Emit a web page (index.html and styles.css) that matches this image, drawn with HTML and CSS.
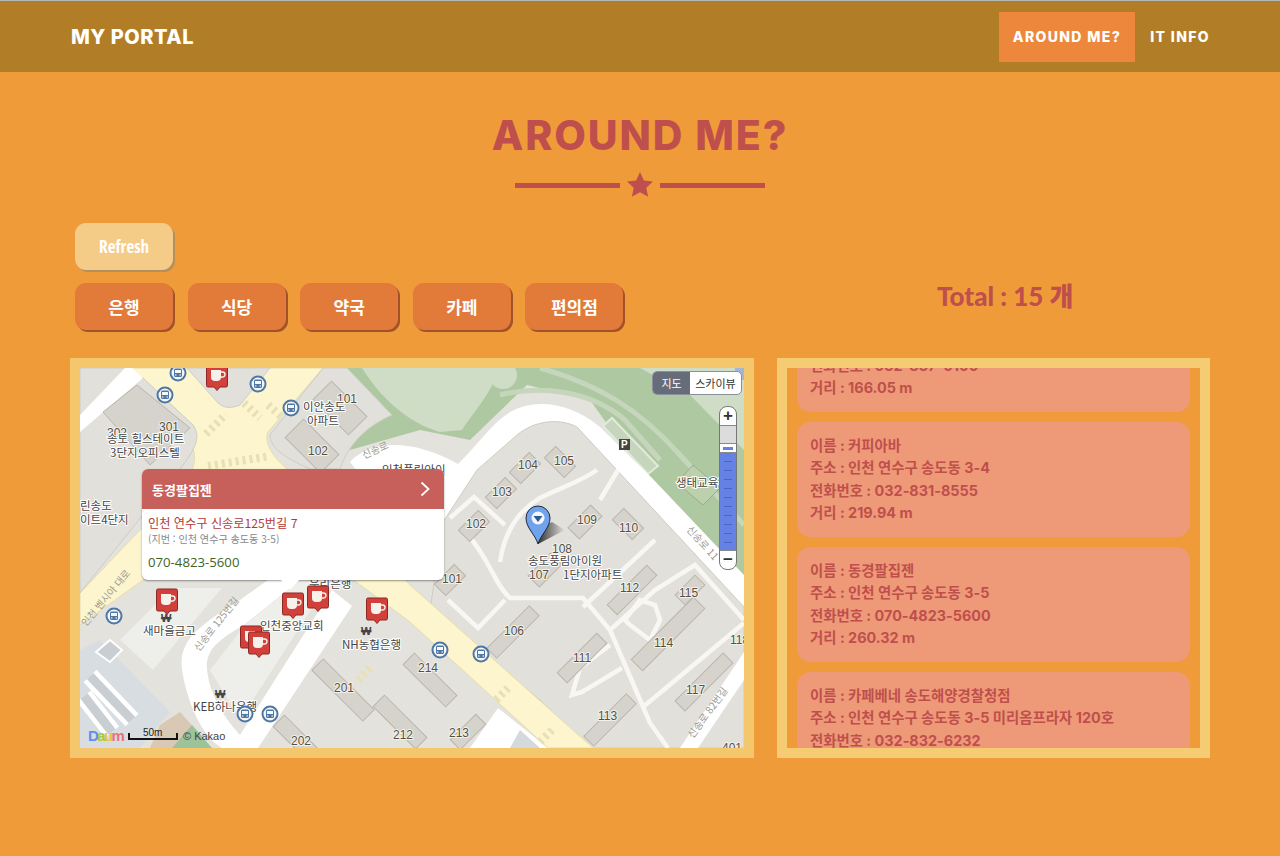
FILE: index.html
```html
<!DOCTYPE html>
<html lang="ko">

<head>
    <meta charset="UTF-8" />
    <meta name="viewport" content="width=device-width, initial-scale=1.0" />
    <title>My Portal</title>
    <link rel="stylesheet" href="styles.css">
</head>

<body>
    <header class="top-bar">
        <a class="logo">MY PORTAL</a>
        <nav class="nav">
            <a class="nav-item active">AROUND ME?</a>
            <a class="nav-item">IT INFO</a>
        </nav>
    </header>

    <main class="page">
        <h1 class="page-title">AROUND ME?</h1>
        <div class="divider">
            <span class="divider-line"></span>
            <svg class="divider-star" viewBox="0 0 26 25">
                <path d="M13 0l3.900 8.400 9.100 1.100-6.700 6.200 1.800 9.100L13 20.300 4.900 24.800l1.800-9.100L0 9.500l9.100-1.100z" />
            </svg>
            <span class="divider-line"></span>
        </div>

        <div class="toolbar">
            <div class="toolbar-buttons">
                <button class="btn btn-light">Refresh</button>
                <div class="category-row">
                    <button class="btn">은행</button>
                    <button class="btn">식당</button>
                    <button class="btn">약국</button>
                    <button class="btn">카페</button>
                    <button class="btn">편의점</button>
                </div>
            </div>
            <div class="total">Total : 15 개</div>
        </div>

        <div class="panels">
            <section class="map-panel">
                <div class="map">
                    <svg class="map-canvas" viewBox="80 368 664 380">
                        <defs>
                            <symbol id="bus" viewBox="0 0 18 18">
                                <circle cx="9" cy="9" r="7.500" fill="#f4f6f8" stroke="#4f77a3" stroke-width="2" />
                                <rect x="5" y="4.500" width="8" height="8.500" rx="1.500" fill="#4f77a3" />
                                <rect x="6" y="6" width="6" height="3" fill="#f4f6f8" />
                                <circle cx="6.800" cy="11" r=".8" fill="#f4f6f8" />
                                <circle cx="11.200" cy="11" r=".8" fill="#f4f6f8" />
                            </symbol>
                            <symbol id="cafe" viewBox="0 0 22 27">
                                <path d="M2 1h18a1.500 1.500 0 0 1 1.500 1.500v19a1.500 1.500 0 0 1-1.500 1.500h-6l-3 3.500L8 23H2a1.500 1.500 0 0 1-1.500-1.500v-19A1.500 1.500 0 0 1 2 1z" fill="#d2403b" stroke="#8c2723" />
                                <path d="M5 6h10v7a4 4 0 0 1-4 4H9a4 4 0 0 1-4-4z" fill="#f7f1ec" />
                                <path d="M15 8h1.500a2.200 2.200 0 0 1 0 5H15" fill="none" stroke="#f7f1ec" stroke-width="1.400" />
                            </symbol>
                            <linearGradient id="pin-shadow" x1="0" x2="1" y1="0" y2="0">
                                <stop offset="0" stop-color="#333" />
                                <stop offset="1" stop-color="#333" stop-opacity="0" />
                            </linearGradient>
                        </defs>

                        <!-- 바닥 -->
                        <rect class="ground" x="80" y="368" width="664" height="380" />

                        <!-- 공원 -->
                        <path class="park" d="M322 368H744V620L640 470 590 400 527 385 470 440 420 430 350 450Z" />
                        <path class="park-light" d="M362 368H500C490 395 475 410 462 430L440 432C415 425 385 405 362 368Z" />
                        <path class="park-path" d="M540 368C600 385 640 410 680 455L744 525" />
                        <path class="park-path" d="M500 395C540 385 590 390 625 420L660 460" />
                        <path class="park-light" d="M640 368H744V450L690 395Z" />
                        <circle class="park-light" cx="503" cy="375" r="14" />
                        <rect class="water" x="735" y="368" width="9" height="12" />
                        <path class="park-lot" d="M603 426L612 418 658 466 648 474Z" />
                        <path class="park-dark" d="M693 465L720 488 703 505 677 483Z" />

                        <!-- 도로 -->
                        <path class="road" d="M350 462C370 440 412 438 458 464C475 448 490 425 510 412C535 398 570 402 600 427L652 478L744 575V625L690 575 600 480 540 430 500 470 460 560 380 500Z" />
                        <path class="road" d="M332 590L352 606 258 748H222C200 735 187 700 182 670C178 640 200 625 240 600L268 580H300L244 625C218 640 205 650 207 670C210 695 222 715 240 735Z" />
                        <path class="block-light" d="M120 640L172 588H222L153 670Z" />
                        <path class="block-light" d="M245 625L300 580H330L240 720 210 670Z" />

                        <!-- 아파트 단지 -->
                        <path class="block" d="M443 522L477 470 517 435C535 420 560 418 577 427L693 552 744 607V748H590L540 700 430 610Z" />
                        <path class="road" d="M744 652V680L698 748H680Z" />
                        <path class="lane" d="M500 562C504 535 516 512 540 498C560 488 580 482 597 470" />
                        <path class="lane" d="M450 518L474 497 505 525" />
                        <path class="lane" d="M468 535C490 560 495 585 510 598H583L610 630 650 723 668 748" />
                        <path class="lane" d="M583 607L655 540" />
                        <path class="lane" d="M610 630L655 590 695 565 744 620" />
                        <path class="lane" d="M643 707L744 623" />
                        <path class="lane" d="M610 645L580 668 572 695 582 692 622 668" />
                        <path class="lane" d="M630 625L650 640 660 620 655 605 640 600 625 620Z" />
                        <path class="lane" d="M448 600L478 628 505 600" />
                        <path class="lane" d="M600 500L618 470" />

                        <path class="road" d="M498 708L548 748H470Z" />
                        <path class="glass" d="M510 748L520 730 540 748Z" />

                        <!-- 노란 도로 -->
                        <path class="main-road" d="M130 368H323L268 432C262 446 280 470 320 490L410 585 593 748H548L410 622 300 540 240 520 143 580 80 625V593L180 488C205 462 195 440 170 410L130 368Z" />
                        <path class="block" d="M187 368L218 403C225 409 232 408 240 405L270 368Z" />
                        <path class="block" d="M80 368H125L143 378 193 425C200 435 198 445 183 465L80 593Z" />
                        <path class="road" d="M80 415L125 368H132L143 378 80 432Z" />
                        <path class="block" d="M323 368H347L392 415C370 425 350 440 340 469H310C290 460 270 450 270 435Z" />
                        <path class="crosswalk" d="M206 434L226 414M244 403L260 418M268 405L283 418M208 466L270 456" />
                        <path class="crosswalk" d="M358 680L372 666M496 700L510 686M540 742L552 730" />

                        <!-- 왼쪽 아래 주차장 -->
                        <path class="parking" d="M80 650L100 640 170 712 140 748H80Z" />
                        <path class="parking-lane" d="M90 676L132 720M84 696L112 732" />
                        <path class="parking-bar" d="M90 676L132 720M84 696L112 732" />
                        <path class="parking-lot" d="M96 652L110 640 122 650 110 662Z" />
                        <path class="field" d="M160 725L180 712 205 740 195 748H150Z" />
                        <path class="field-green" d="M172 748L192 725 212 748Z" />

                        <!-- 건물 -->
                        <path class="bld" d="M103 412L137 385 190 428 150 465Z" />
                        <rect class="bld" x="-25" y="-13" width="50" height="26" transform="translate(340 408) rotate(45)" />
                        <rect class="bld" x="-25" y="-13" width="50" height="26" transform="translate(312 446) rotate(45)" />
                        <rect class="bld" x="-14" y="-8" width="28" height="16" transform="translate(525 468) rotate(-45)" />
                        <rect class="bld" x="-14" y="-8" width="28" height="16" transform="translate(560 462) rotate(45)" />
                        <rect class="bld" x="-14" y="-8" width="28" height="16" transform="translate(501 493) rotate(-45)" />
                        <rect class="bld" x="-14" y="-8" width="28" height="16" transform="translate(474 526) rotate(-45)" />
                        <rect class="bld" x="-16" y="-8" width="32" height="16" transform="translate(585 522) rotate(-45)" />
                        <rect class="bld" x="-14" y="-8" width="28" height="16" transform="translate(628 524) rotate(45)" />
                        <rect class="bld" x="-16" y="-8" width="32" height="16" transform="translate(545 570) rotate(-45)" />
                        <rect class="bld" x="-28" y="-7" width="56" height="14" transform="translate(632 590) rotate(-45)" />
                        <rect class="bld" x="-14" y="-7" width="28" height="14" transform="translate(690 590) rotate(-45)" />
                        <rect class="bld" x="-44" y="-8" width="88" height="16" transform="translate(668 634) rotate(-45)" />
                        <rect class="bld" x="-34" y="-7" width="68" height="14" transform="translate(704 682) rotate(-45)" />
                        <rect class="bld" x="-28" y="-7" width="56" height="14" transform="translate(582 658) rotate(-45)" />
                        <rect class="bld" x="-30" y="-7" width="60" height="14" transform="translate(513 632) rotate(-45)" />
                        <rect class="bld" x="-30" y="-7" width="60" height="14" transform="translate(610 720) rotate(-45)" />
                        <rect class="bld" x="-14" y="-8" width="28" height="16" transform="translate(450 580) rotate(-45)" />
                        <rect class="bld" x="-36" y="-8" width="72" height="16" transform="translate(343 690) rotate(45)" />
                        <rect class="bld" x="-30" y="-8" width="60" height="16" transform="translate(400 722) rotate(45)" />
                        <rect class="bld" x="-30" y="-8" width="60" height="16" transform="translate(430 680) rotate(45)" />
                        <rect class="bld" x="-30" y="-8" width="60" height="16" transform="translate(300 742) rotate(45)" />
                        <rect class="bld" x="-18" y="-7" width="36" height="14" transform="translate(468 732) rotate(-45)" />

                        <!-- 라벨 -->
                        <text class="num" x="337" y="403">101</text>
                        <text class="num" x="159" y="431">301</text>
                        <text class="num" x="107" y="437">302</text>
                        <text class="num" x="308" y="455">102</text>
                        <text class="num" x="518" y="469">104</text>
                        <text class="num" x="554" y="465">105</text>
                        <text class="num" x="492" y="496">103</text>
                        <text class="num" x="466" y="528">102</text>
                        <text class="num" x="577" y="524">109</text>
                        <text class="num" x="619" y="532">110</text>
                        <text class="num" x="552" y="553">108</text>
                        <text class="num" x="529" y="579">107</text>
                        <text class="num" x="620" y="592">112</text>
                        <text class="num" x="679" y="597">115</text>
                        <text class="num" x="654" y="647">114</text>
                        <text class="num" x="573" y="662">111</text>
                        <text class="num" x="504" y="635">106</text>
                        <text class="num" x="598" y="720">113</text>
                        <text class="num" x="686" y="694">117</text>
                        <text class="num" x="730" y="644">118</text>
                        <text class="num" x="442" y="583">101</text>
                        <text class="num" x="334" y="692">201</text>
                        <text class="num" x="291" y="745">202</text>
                        <text class="num" x="393" y="739">212</text>
                        <text class="num" x="449" y="737">213</text>
                        <text class="num" x="418" y="672">214</text>
                        <text class="num" x="722" y="752">401</text>

                        <text class="label" x="303" y="411">이안송도</text>
                        <text class="label" x="307" y="425">아파트</text>
                        <text class="label" x="107" y="443">송도 힐스테이트</text>
                        <text class="label" x="110" y="457">3단지오피스텔</text>
                        <text class="label" x="80" y="510">린송도</text>
                        <text class="label" x="80" y="524">이트4단지</text>
                        <text class="label" x="676" y="487">생태교육관</text>
                        <text class="label" x="528" y="565">송도풍림아이원</text>
                        <text class="label" x="563" y="579">1단지아파트</text>
                        <text class="label" x="143" y="635">새마을금고</text>
                        <text class="label" x="260" y="630">인천중앙교회</text>
                        <text class="label" x="342" y="649">NH농협은행</text>
                        <text class="label" x="193" y="711">KEB하나은행</text>
                        <text class="label" x="309" y="588">우리은행</text>
                        <text class="label" x="382" y="474">인천풍림아이</text>

                        <text class="won" x="161" y="622">₩</text>
                        <text class="won" x="361" y="635">₩</text>
                        <text class="won" x="215" y="698">₩</text>

                        <text class="street" transform="translate(364 459) rotate(-24)">신송로</text>
                        <text class="street" transform="translate(86 627) rotate(-50)">인천 벤시아 대로</text>
                        <text class="street" transform="translate(199 652) rotate(-52)">신송로 125번길</text>
                        <text class="street" transform="translate(686 530) rotate(48)">신송로 11</text>
                        <text class="street" transform="translate(693 739) rotate(-54)">신송로 82번길</text>

                        <rect class="parking-sign" x="619" y="439" width="11" height="11" />
                        <text class="parking-letter" x="621" y="448">P</text>

                        <!-- 버스 정류장 -->
                        <use href="#bus" x="169" y="364" width="18" height="18" />
                        <use href="#bus" x="156" y="386" width="18" height="18" />
                        <use href="#bus" x="249" y="375" width="18" height="18" />
                        <use href="#bus" x="282" y="399" width="18" height="18" />
                        <use href="#bus" x="105" y="607" width="18" height="18" />
                        <use href="#bus" x="431" y="641" width="18" height="18" />
                        <use href="#bus" x="472" y="645" width="18" height="18" />
                        <use href="#bus" x="236" y="705" width="18" height="18" />
                        <use href="#bus" x="261" y="705" width="18" height="18" />

                        <!-- 카페 마커 -->
                        <use href="#cafe" x="206" y="364" width="22" height="27" />
                        <use href="#cafe" x="156" y="588" width="22" height="27" />
                        <use href="#cafe" x="282" y="592" width="22" height="27" />
                        <use href="#cafe" x="307" y="585" width="22" height="27" />
                        <use href="#cafe" x="366" y="597" width="22" height="27" />
                        <use href="#cafe" x="240" y="625" width="22" height="27" />
                        <use href="#cafe" x="248" y="631" width="22" height="27" />

                        <!-- 현재 위치 -->
                        <path d="M538 544L565 530 552 522 540 528Z" fill="url(#pin-shadow)" />
                        <path class="pin" d="M538 544C535 534 526 528 526 518a12 12 0 0 1 24 0C550 528 541 534 538 544Z" />
                        <circle cx="538" cy="518" r="6.500" fill="#f4f6fb" />
                        <path d="M533.500 516h9L538 522Z" fill="#2f5b93" />

                        <!-- 로고, 축척 -->
                        <text class="daum" x="88" y="741"><tspan fill="#5f8ff0">D</tspan><tspan fill="#a8c93a">a</tspan><tspan fill="#f0c040">u</tspan><tspan fill="#e8707a">m</tspan></text>
                        <text class="scale-text" x="143" y="736">50m</text>
                        <path class="scale" d="M129 733V739H177V733" />
                        <text class="kakao" x="183" y="740">© Kakao</text>
                    </svg>

                    <div class="map-type">
                        <span class="map-type-item on">지도</span>
                        <span class="map-type-item">스카이뷰</span>
                    </div>

                    <div class="zoom">
                        <div class="zoom-btn">+</div>
                        <div class="zoom-grey"></div>
                        <div class="zoom-handle"></div>
                        <div class="zoom-blue"></div>
                        <div class="zoom-btn">−</div>
                    </div>

                    <div class="info">
                        <div class="info-head">
                            <span>동경팔집젠</span>
                            <svg class="info-arrow" viewBox="0 0 10 16">
                                <path d="M1.500 1.500L8.500 8 1.500 14.500" />
                            </svg>
                        </div>
                        <div class="info-body">
                            <p class="info-addr">인천 연수구 신송로125번길 7</p>
                            <p class="info-jibun">(지번 : 인천 연수구 송도동 3-5)</p>
                            <p class="info-tel">070-4823-5600</p>
                        </div>
                    </div>
                </div>
            </section>

            <section class="list-panel">
                <div class="list">
                    <div class="card">
                        <p>이름 : 송도약국</p>
                        <p>주소 : 인천 연수구 송도동 3-4</p>
                        <p>전화번호 : 032-837-0100</p>
                        <p>거리 : 166.05 m</p>
                    </div>
                    <div class="card">
                        <p>이름 : 커피아바</p>
                        <p>주소 : 인천 연수구 송도동 3-4</p>
                        <p>전화번호 : 032-831-8555</p>
                        <p>거리 : 219.94 m</p>
                    </div>
                    <div class="card">
                        <p>이름 : 동경팔집젠</p>
                        <p>주소 : 인천 연수구 송도동 3-5</p>
                        <p>전화번호 : 070-4823-5600</p>
                        <p>거리 : 260.32 m</p>
                    </div>
                    <div class="card">
                        <p>이름 : 카페베네 송도해양경찰청점</p>
                        <p>주소 : 인천 연수구 송도동 3-5 미리옴프라자 120호</p>
                        <p>전화번호 : 032-832-6232</p>
                        <p>거리 : 271.80 m</p>
                    </div>
                </div>
            </section>
        </div>
    </main>
</body>

</html>
```

FILE: styles.css
```css
* {
    box-sizing: border-box;
}

body {
    margin: 0;
    height: 856px;
    overflow: hidden;
    background-color: #f09b3a;
    font-family: "Lato", "Noto Sans CJK KR", sans-serif;
}

p {
    margin: 0;
}

/* 상단 바 */
.top-bar {
    display: flex;
    justify-content: space-between;
    align-items: center;
    height: 72px;
    padding: 0 70px 0 71px;
    border-top: 1px solid #b4b9b4;
    background-color: #b17e27;
    color: #fff;
}

.logo {
    font-family: "Inter", sans-serif;
    font-size: 20px;
    font-weight: 800;
    letter-spacing: 0.5px;
}

.nav {
    display: flex;
    align-items: center;
}

.nav-item {
    padding: 0 14px;
    height: 50px;
    line-height: 50px;
    font-family: "Inter", sans-serif;
    font-size: 14px;
    font-weight: 800;
    letter-spacing: 1.360px;
}

.nav-item:last-child {
    padding-right: 0;
    padding-left: 15px;
}

.active {
    background-color: #ec873c;
}

/* 제목 */
.page {
    padding: 0 70px;
}

.page-title {
    margin: 37px 0 0;
    text-align: center;
    font-family: "Inter", sans-serif;
    font-size: 41px;
    line-height: 52px;
    font-weight: 800;
    letter-spacing: 1.900px;
    color: #bf4f4c;
}

.divider {
    display: flex;
    justify-content: center;
    align-items: center;
    gap: 7px;
    margin-top: 11px;
}

.divider-line {
    width: 105px;
    height: 5px;
    margin-top: 2px;
    background-color: #bf4f4c;
}

.divider-star {
    width: 26px;
    height: 25px;
    fill: #bf4f4c;
}

/* 버튼 */
.toolbar {
    display: flex;
    align-items: flex-end;
    margin-top: 26px;
    padding-left: 5px;
}

.toolbar-buttons {
    display: flex;
    flex-direction: column;
    gap: 13px;
    align-items: flex-start;
    width: 862px;
}

.category-row {
    display: flex;
    gap: 14.600px;
}

.btn {
    width: 98px;
    height: 47px;
    border: 0;
    border-radius: 11px;
    background-color: #e27a3a;
    box-shadow: 2px 2px 0 #a2522a;
    color: #fff;
    font-family: "Noto Sans CJK KR", sans-serif;
    font-size: 17px;
    font-weight: 700;
}

.btn-light {
    background-color: #f5cb88;
    box-shadow: 2px 2px 0 #b28f5c;
    font-family: "Open Sans", "Noto Sans CJK KR", sans-serif;
    font-stretch: condensed;
}

.total {
    margin-bottom: 19px;
    color: #bf4f4c;
    font-family: "Lato", "Noto Sans CJK KR", sans-serif;
    font-size: 26px;
    font-weight: 900;
    line-height: 30px;
}

/* 지도 / 목록 */
.panels {
    display: flex;
    justify-content: space-between;
    margin-top: 28px;
}

.map-panel {
    width: 684px;
    height: 400px;
    border: 10px solid #f5c76c;
}

.map {
    position: relative;
    height: 380px;
    overflow: hidden;
}

.map-canvas {
    display: block;
    width: 664px;
    height: 380px;
}

.ground {
    fill: #e4e2dd;
}

.block {
    fill: #e2e0db;
    stroke: #cfccc4;
}

.block-light {
    fill: #eeeeea;
}

.park {
    fill: #aec9a1;
}

.park-light {
    fill: #cfdcc6;
}

.park-path {
    fill: none;
    stroke: #c6d6bc;
    stroke-width: 5;
}

.park-lot {
    fill: #c6d6bc;
    stroke: #e2eadc;
    stroke-width: 2;
}

.park-dark {
    fill: #bcd0ae;
    stroke: #98b088;
}

.water {
    fill: #a3b5d8;
}

.road {
    fill: #fff;
}

.glass {
    fill: #d3d9dc;
}

.main-road {
    fill: #fdf5cd;
    stroke: #e6dcae;
}

.lane {
    fill: none;
    stroke: #f8f7f4;
    stroke-width: 4.500;
}

.crosswalk {
    fill: none;
    stroke: #e7dfb5;
    stroke-width: 8;
    stroke-dasharray: 3 4;
}

.parking {
    fill: #d8dde1;
}

.parking-lane {
    fill: none;
    stroke: #fff;
    stroke-width: 18;
}

.parking-bar {
    fill: none;
    stroke: #c9ced3;
    stroke-width: 9;
}

.parking-lot {
    fill: #c9ced3;
    stroke: #fff;
    stroke-width: 2;
}

.field {
    fill: #d9c8b4;
}

.field-green {
    fill: #9cc39a;
}

.bld {
    fill: #d6d3cd;
    stroke: #bab6ad;
}

.num {
    fill: #55503f;
    font-family: "Liberation Sans", sans-serif;
    font-size: 12px;
    paint-order: stroke;
    stroke: #f2f1ee;
    stroke-width: 2px;
}

.label {
    fill: #444;
    font-family: "Noto Sans CJK KR", sans-serif;
    font-size: 11.500px;
    paint-order: stroke;
    stroke: #fff;
    stroke-width: 2px;
}

.won {
    fill: #444;
    font-family: "Liberation Sans", sans-serif;
    font-size: 11px;
    font-weight: 700;
}

.street {
    fill: #9b9a92;
    font-family: "Noto Sans CJK KR", sans-serif;
    font-size: 10px;
}

.parking-sign {
    fill: #444;
}

.parking-letter {
    fill: #fff;
    font-family: "Liberation Sans", sans-serif;
    font-size: 10px;
    font-weight: 700;
}

.pin {
    fill: #6fa3ec;
    stroke: #1d2a3c;
}

.daum {
    font-family: "Liberation Sans", sans-serif;
    font-size: 15px;
    font-weight: 700;
    letter-spacing: -1.600px;
}

.scale-text {
    fill: #222;
    font-family: "Liberation Sans", sans-serif;
    font-size: 10px;
}

.scale {
    fill: none;
    stroke: #111;
    stroke-width: 2;
}

.kakao {
    fill: #444;
    font-family: "Liberation Sans", sans-serif;
    font-size: 11px;
}

.map-type {
    position: absolute;
    top: 3px;
    right: 2px;
    display: flex;
    height: 24px;
    border-radius: 5px;
    border: 1px solid #8a8f99;
    overflow: hidden;
    background-color: #fff;
    color: #333;
    font-family: "Noto Sans CJK KR", sans-serif;
    font-size: 11px;
    line-height: 22px;
}

.map-type-item {
    width: 51px;
    text-align: center;
}

.on {
    width: 37px;
    background-color: #666c7a;
    color: #fff;
}

.zoom {
    position: absolute;
    top: 38px;
    left: 639px;
    width: 18px;
    height: 164px;
    display: flex;
    flex-direction: column;
    border: 1px solid #777;
    border-radius: 8px;
    overflow: hidden;
    background-color: #fff;
}

.zoom-btn {
    height: 18px;
    text-align: center;
    color: #333;
    font-family: "Liberation Sans", sans-serif;
    font-size: 17px;
    font-weight: 700;
    line-height: 17px;
}

.zoom-grey {
    height: 18px;
    border-top: 1px solid #888;
    background-color: #dcdcdc;
}

.zoom-handle {
    height: 10px;
    border-top: 1px solid #888;
    border-bottom: 1px solid #888;
    background: linear-gradient(#6681e6, #6681e6) center / 10px 3px no-repeat, #fff;
}

.zoom-blue {
    flex: 1;
    border-bottom: 1px solid #888;
    background: repeating-linear-gradient(#6681e6 0, #6681e6 8px, #4d64bf 8px, #4d64bf 9px) center / 8px 100% no-repeat, #6681e6;
}

/* 인포윈도우 */
.info {
    position: absolute;
    top: 101px;
    left: 62px;
    width: 302px;
    height: 111px;
    border-radius: 6px;
    background-color: #fff;
    box-shadow: 0 1px 2px rgba(0, 0, 0, 0.4);
    font-family: "Noto Sans CJK KR", sans-serif;
}

.info::after {
    content: "";
    position: absolute;
    top: 111px;
    left: 139px;
    border-top: 10px solid #fff;
    border-left: 9px solid transparent;
    border-right: 9px solid transparent;
}

.info-head {
    display: flex;
    justify-content: space-between;
    align-items: center;
    height: 40px;
    padding: 0 14px 0 10px;
    border-radius: 6px 6px 0 0;
    background-color: #c75f5b;
    color: #fff;
    font-size: 13px;
    font-weight: 700;
}

.info-arrow {
    width: 10px;
    height: 16px;
    fill: none;
    stroke: #fff;
    stroke-width: 1.800;
}

.info-body {
    padding: 5px 6px 0;
}

.info-addr {
    color: #b23a36;
    font-size: 12.200px;
    line-height: 18px;
}

.info-jibun {
    color: #888;
    font-size: 10.100px;
    line-height: 14px;
}

.info-tel {
    margin-top: 7px;
    color: #3d6425;
    font-family: "Open Sans", sans-serif;
    font-size: 13.200px;
    line-height: 18px;
}

/* 목록 */
.list-panel {
    width: 433px;
    height: 400px;
    border: 10px solid #f5cc72;
}

.list {
    display: flex;
    flex-direction: column;
    gap: 10px;
    height: 380px;
    padding: 0 10px;
    overflow: hidden;
}

.card {
    flex: none;
    height: 115px;
    padding: 13px 13px;
    border-radius: 14px;
    background-color: #ee9a78;
    color: #bf4f4c;
    font-family: "Inter", "Noto Sans CJK KR", sans-serif;
    font-size: 14.400px;
    font-weight: 700;
    line-height: 22.300px;
}

.card:first-child {
    margin-top: -71px;
}
```
